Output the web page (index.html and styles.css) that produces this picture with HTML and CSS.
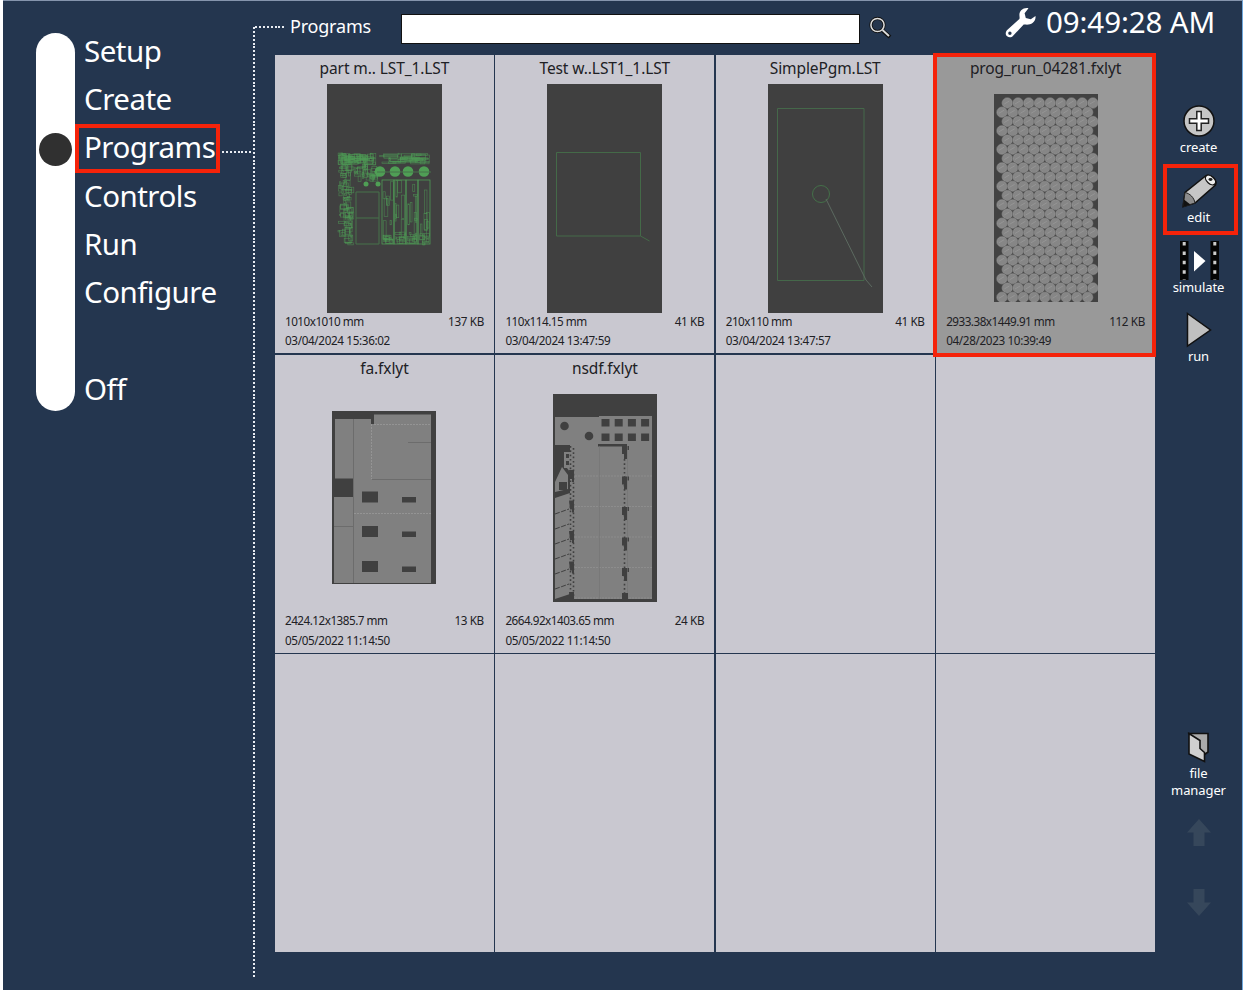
FILE: index.html
```html
<!DOCTYPE html>
<html lang="en">
<head>
<meta charset="utf-8">
<title>Programs</title>
<link rel="stylesheet" href="styles.css">
</head>
<body>
<div class="panel">
  <aside class="sidebar">
    <div class="track"><span class="knob"></span></div>
    <nav class="menu">
      <a class="item">Setup</a>
      <a class="item">Create</a>
      <a class="item active">Programs</a>
      <a class="item">Controls</a>
      <a class="item">Run</a>
      <a class="item">Configure</a>
      <a class="item off">Off</a>
    </nav>
  </aside>
  <div class="rule"></div>
  <div class="work">
    <header class="top">
      <span class="lead"></span>
      <span class="heading">Programs</span>
      <input class="search" type="text" aria-label="Search">
      <svg class="glass" width="24" height="24" viewBox="0 0 24 24"><path d="M14 15l7 6" stroke="#111" stroke-width="4"/><circle cx="8.500" cy="9" r="6.600" fill="#26364d" stroke="#111" stroke-width="3.2"/><circle cx="8.500" cy="9" r="6.600" fill="none" stroke="#ddd" stroke-width="1.5"/><path d="M13.500 14l6.500 6" stroke="#ddd" stroke-width="1.800"/></svg>
      <svg class="wrench" width="32" height="32" viewBox="0 0 32 32"><path fill="#fff" fill-rule="evenodd" d="M23.5 1.2C18.2.3 14.2 3.700 14.400 8.300C14.500 10 14.800 11.100 14.400 12L1.900 23.200C.2 25 .4 27.800 2.100 29.300C4 30.900 6.700 30.500 8.100 28.700L18.700 17.600C20 17.300 21.300 17.900 23.500 17.600C28 17 31 13.200 30.500 9L25.800 12.300L20.800 10.900L19.600 6.200ZM4.900 24.600a1.700 1.700 0 1 1 0 3.400a1.700 1.700 0 1 1 0-3.400Z"/></svg>
      <time class="clock">09:49:28 AM</time>
    </header>
    <div class="body">
      <main class="grid">
        <article class="cell"><h2>part m.. LST_1.LST</h2>
          <div class="thumb"><svg id="nest" width="115" height="229" viewBox="0 0 115 229"><rect width="115" height="229" fill="#404040"/></svg></div>
          <p><span class="dims">1010x1010 mm</span><span>137 KB</span></p><p>03/04/2024 15:36:02</p></article>
        <article class="cell"><h2>Test w..LST1_1.LST</h2>
          <div class="thumb"><svg width="115" height="229" viewBox="0 0 115 229"><rect width="115" height="229" fill="#404040"/><path d="M9.500 68.500h84v83.500h-84zM93.500 152l9 5" fill="none" stroke="#446a48"/></svg></div>
          <p><span class="dims">110x114.15 mm</span><span>41 KB</span></p><p>03/04/2024 13:47:59</p></article>
        <article class="cell"><h2>SimplePgm.LST</h2>
          <div class="thumb"><svg width="115" height="229" viewBox="0 0 115 229"><rect width="115" height="229" fill="#404040"/><path d="M9.500 24.500h86.500v172h-86.500z" fill="none" stroke="#45684a"/><circle cx="53" cy="110" r="8.500" fill="none" stroke="#447049"/><path d="M58 115l40 81 6 7" fill="none" stroke="#5c6a60"/></svg></div>
          <p><span class="dims">210x110 mm</span><span>41 KB</span></p><p>03/04/2024 13:47:57</p></article>
        <article class="cell selected"><h2>prog_run_04281.fxlyt</h2>
          <div class="thumb"><svg id="discs" width="104" height="208" viewBox="0 0 104 208"><rect width="104" height="208" fill="#424242"/></svg></div>
          <p><span class="dims">2933.38x1449.91 mm</span><span>112 KB</span></p><p>04/28/2023 10:39:49</p></article>
        <article class="cell"><h2>fa.fxlyt</h2>
          <div class="thumb"><svg width="104" height="173" viewBox="0 0 104 173"><rect width="104" height="173" fill="#404040"/><path fill="#808080" d="M3 8h36v5h3V3.500h57V172H2V86h19V67.500H3z"/><g fill="#404040"><path d="M30 80.500h16v11H30zM30 115h16v11H30zM30 150h16v11H30zM70 86h14v5.500H70zM70 120.500h14v5.500H70zM70 155.500h14v5.500H70z"/></g><g fill="none"><path stroke="#6c6c6c" d="M21.500 8v164M76 31.500h23M40 68.500h59M2 115.500h19"/><path stroke="#949494" stroke-dasharray="2 1" d="M39.500 13v55M42 13.500h57M22 102.500h77"/></g></svg></div>
          <p><span class="dims">2424.12x1385.7 mm</span><span>13 KB</span></p><p>05/05/2022 11:14:50</p></article>
        <article class="cell"><h2>nsdf.fxlyt</h2>
          <div class="thumb"><svg id="frames" width="104" height="208" viewBox="0 0 104 208"><rect width="104" height="208" fill="#404040"/><path fill="#808080" d="M2 23h44v-1h53v183H17V78l-3-4h-3V58h6V51H2zM2 98V88l7-15 6 8v14zM2 104l15-5v101l-15 5z"/></svg></div>
          <p><span class="dims">2664.92x1403.65 mm</span><span>24 KB</span></p><p>05/05/2022 11:14:50</p></article>
        <article class="cell"></article><article class="cell"></article>
        <article class="cell"></article><article class="cell"></article>
        <article class="cell"></article><article class="cell"></article>
      </main>
      <aside class="rail">
        <button class="act"><svg width="40" height="40" viewBox="0 0 40 40"><circle cx="20" cy="20" r="15" fill="#c6c6c6" stroke="#111" stroke-width="1.500"/><path d="M17.800 10.500h4.400v7.300h7.300v4.400h-7.300v7.300h-4.400v-7.300h-7.300v-4.400h7.300z" fill="#fff" stroke="#222" stroke-width="1.500"/></svg><span>create</span></button>
        <button class="act marked"><svg width="40" height="40" viewBox="0 0 40 40"><path d="M4 35.700L6 21.500 26.500 5C31 2 39 9 36.500 14L16 32z" fill="#c6c6c6" stroke="#111" stroke-width="1.500"/><path d="M6 21.500c5 1 9 5 10 10.500L4 35.700z" fill="#8c8c8c" stroke="#222"/><path d="M4 36L4.900 28.500l6.500 5z" fill="#111"/><ellipse cx="31.500" cy="9" rx="6" ry="3.600" transform="rotate(42 31.500 9)" fill="#ededed" stroke="#111" stroke-width="1.300"/><ellipse cx="31.500" cy="8.500" rx="2" ry="1.400" fill="#222"/></svg><span>edit</span></button>
        <button class="act"><svg width="40" height="40" viewBox="0 0 40 40"><path d="M1 0h8.500v39H1zM31.500 0h8.500v39h-8.500z" fill="#050505"/><path d="M5.200 1v38M35.800 1v38" stroke="#ccc" stroke-width="3" stroke-dasharray="3.500 5.900"/><path d="M15 10l11.500 10-11.500 10.500z" fill="#fff"/></svg><span>simulate</span></button>
        <button class="act"><svg width="40" height="40" viewBox="0 0 40 40"><path d="M8.500 3.500L31.500 20 8.500 36z" fill="#c0c0c0" stroke="#111" stroke-width="1.500"/></svg><span>run</span></button>
        <button class="act files"><svg width="40" height="40" viewBox="0 0 40 40"><path d="M10 8.500h19V27l-4 3z" fill="#aaa" stroke="#111" stroke-width="1.600"/><path d="M10 8.500l11 7v8l4.500 4v9L10 29z" fill="#d0d0d0" stroke="#111" stroke-width="1.600"/></svg><span>file<br>manager</span></button>
        <button class="act arrow up" aria-label="Scroll up"><svg width="26" height="28" viewBox="0 0 26 28"><path d="M13 0l12 13.500h-6.500V27h-11V13.500H1z" fill="#36475b"/></svg></button>
        <button class="act arrow" aria-label="Scroll down"><svg width="26" height="28" viewBox="0 0 26 28"><path d="M13 27L1 13.500h6.500V0h11v13.500H25z" fill="#36475b"/></svg></button>
      </aside>
    </div>
  </div>
</div>
<script src="thumbs.js"></script>
</body>
</html>
```
FILE: thumbs.js
```js
const NS = 'http://www.w3.org/2000/svg';
function add(svg, tag, attrs) {
  const el = document.createElementNS(NS, tag);
  for (const k in attrs) el.setAttribute(k, attrs[k]);
  svg.appendChild(el);
}

// Hexagonally packed discs
const discs = document.getElementById('discs');
for (let r = 0; r < 22; r++) {
  for (let c = 0; c < 9; c++) {
    const cx = (r % 2 ? 8 : 13.3) + c * 10.7, cy = 9 + r * 9.25;
    add(discs, 'circle', { cx, cy, r: 5.1, fill: '#868686', stroke: '#a0a0a0', 'stroke-width': 0.7 });
    add(discs, 'circle', { cx, cy, r: 5.5, fill: 'none', stroke: '#5e5e5e', 'stroke-width': 0.5 });
    add(discs, 'path', { d: `M${cx - 3} ${cy + 1}l5-3`, stroke: '#989898', 'stroke-width': 0.8 });
  }
}

// Dense nest of small cut parts
const nest = document.getElementById('nest');
let seed = 7;
const rnd = () => (seed = (seed * 16807) % 2147483647) / 2147483647;
function parts(n, x, y, w, h, mw, mh) {
  for (let i = 0; i < n; i++) {
    const pw = 1 + rnd() * mw, ph = 1 + rnd() * mh;
    add(nest, 'rect', { x: x + rnd() * (w - pw), y: y + rnd() * (h - ph), width: pw, height: ph,
      fill: 'none', stroke: '#4f9a55', 'stroke-width': 0.65, opacity: 0.7 });
  }
}
parts(65, 11, 69, 38, 12, 8, 6);
parts(32, 50, 69, 54, 11, 18, 3);
parts(70, 11, 80, 16, 81, 7, 7);
parts(30, 27, 80, 25, 18, 7, 7);
for (let k = 0; k < 4; k++) {
  const x = 56 + k * 12;
  parts(7, x, 95, 11, 65, 3, 30);
  parts(9, x, 148, 11, 13, 7, 5);
  add(nest, 'rect', { x: x - 1, y: 96, width: 12, height: 64, fill: 'none', stroke: '#4f9a55', 'stroke-width': 0.8 });
}
[53, 68, 81, 97].forEach(cx => add(nest, 'circle', { cx, cy: 87.5, r: 5.3, fill: '#4f9f55' }));
[[39, 100], [51, 100]].forEach(p => add(nest, 'circle', { cx: p[0], cy: p[1], r: 2.5, fill: '#4f9f55' }));
add(nest, 'path', { d: 'M29 108h23v52H29zM29 134h23M50 88h54', fill: 'none', stroke: '#46724a' });

// Sheet with square cut-outs, toothed columns and stacked brackets
const frames = document.getElementById('frames');
const dark = '#404040';
[0, 1, 2, 3].forEach(c => [25, 39.5].forEach(y =>
  add(frames, 'rect', { x: 48.5 + c * 13.2, y, width: 8, height: 7.5, fill: dark })));
[[11.5, 32], [36, 42]].forEach(p => add(frames, 'circle', { cx: p[0], cy: p[1], r: 4.3, fill: dark }));
add(frames, 'path', { d: 'M45 50h29v2.500H45zM6 88h8v8H6zM13 60h3v4h-3zM13 67h3v4h-3z', fill: dark });
for (let i = 0; i < 5; i++) {
  const y = 52 + i * 30.5;
  add(frames, 'path', { d: `M16 ${y + 24}h5v12h-2v-3h-2zM69 ${y}h7v4h-2v9h-3v-5h-2z`, fill: dark });
  add(frames, 'path', { d: `M22 ${y + 30}h77`, stroke: '#969696', 'stroke-width': 0.6, 'stroke-dasharray': '2 1' });
}
add(frames, 'path', { d: 'M17.500 52v150M20.500 54v148M71.500 65v140', stroke: dark, 'stroke-width': 1.6, 'stroke-dasharray': '1.700 2.600' });
add(frames, 'path', { d: 'M46.500 52v153M74.500 52v153', stroke: '#727272', 'stroke-width': 0.6 });
for (let y = 120; y < 205; y += 15) {
  add(frames, 'path', { d: `M2 ${y}l14-5`, stroke: dark, 'stroke-width': 1, 'stroke-dasharray': '5 1.500' });
}
add(frames, 'path', { d: 'M69 199h6v7h-6zM16 200h5v6h-5z', fill: dark });
```
FILE: styles.css
```css
*, *::before, *::after { box-sizing: border-box; }
body { margin: 0; background: #fff; font-family: "Noto Sans", "Open Sans", sans-serif; overflow: hidden; }
.panel {
  display: flex; width: 1240px; height: 990px; margin-left: 3px;
  background: #24364f; color: #fff;
  border-top: 1px solid #8595ad; border-right: 1px solid #6fa8dc;
}
.sidebar { display: flex; width: 250px; padding: 32px 0 0 33px; }
.track { width: 39px; height: 378px; padding: 100px 3px 0; border-radius: 20px; background: #fff; }
.knob { display: block; width: 33px; height: 33px; border-radius: 50%; background: #303030; }
.menu { display: flex; flex-direction: column; width: 178px; margin-top: -7px; }
.item {
  display: flex; align-items: center; height: 48.3px; padding-left: 9px;
  font-size: 29.500px; letter-spacing: -0.500px; white-space: nowrap;
}
.active { position: relative; }
.active::before {
  content: ""; position: absolute; left: 0; top: 1px; width: 145px; height: 49px; border: 4px solid #f5230a;
}
.active::after {
  content: ""; position: absolute; left: 147px; top: 28px; width: 31px; height: 2px;
  background: repeating-linear-gradient(90deg, #e8ecf2 0 2px, transparent 2px 3.900px);
}
.off { margin-top: 48.3px; }
.rule {
  width: 2px; height: 951px; margin-top: 26px;
  background: repeating-linear-gradient(#e8ecf2 0 2px, transparent 2px 3.900px);
}
.work { flex: 1; display: flex; flex-direction: column; }
.top { display: flex; align-items: center; height: 54px; padding-bottom: 4px; }
.lead {
  width: 31px; height: 2px; margin-top: 2px;
  background: repeating-linear-gradient(90deg, #e8ecf2 0 2px, transparent 2px 3.900px);
}
.heading { width: 115px; padding-left: 4px; font-size: 18px; letter-spacing: -0.2px; }
.search { width: 459px; height: 30px; margin-top: 6px; padding: 0 6px; background: #fff; border: 1px solid #111; }
.glass { margin: 4px 0 0 9px; }
.wrench { margin: -6px 0 0 112px; }
.clock { margin: -9px 0 0 9px; font-size: 29.500px; letter-spacing: -0.100px; white-space: nowrap; }
.body { display: flex; }
.grid {
  display: grid; grid-template: repeat(3, 1fr) / repeat(4, 1fr); gap: 1.500px;
  width: 880px; height: 897px; margin-left: 20px; background: #24364f;
}
.cell { display: flex; flex-direction: column; padding: 3px 10px 0; background: #c9c8d0; color: #202024; min-width: 0; }
.cell h2 { margin: 0; height: 25.500px; font-size: 15.500px; font-weight: 400; line-height: 21px; text-align: center; letter-spacing: -0.100px; white-space: nowrap; }
.thumb { display: flex; align-items: center; justify-content: center; height: 229px; }
.thumb svg { flex: none; }
.cell p { display: flex; justify-content: space-between; margin: 0; height: 19.500px; font-size: 11.700px; line-height: 17px; letter-spacing: -0.350px; white-space: nowrap; }
.dims { letter-spacing: -0.500px; }
.selected { position: relative; background: #999; }
.selected::after {
  content: ""; position: absolute; left: -3px; top: -2px; right: -1px; bottom: -4px; border: 4px solid #f5230a;
}
.rail { display: flex; flex-direction: column; align-items: center; flex: 1; padding-top: 39px; }
.act {
  display: flex; flex-direction: column; align-items: center; width: 75px; height: 69.800px; padding: 7px 0 0;
  border: 0; background: none; color: #fff; font: 13px/16px "Noto Sans", sans-serif; letter-spacing: -0.100px;
}
.act svg { display: block; flex: none; }
.act span { margin-top: -2px; }
.marked { position: relative; }
.marked::after {
  content: ""; position: absolute; left: 2px; top: 0; width: 75px; height: 71px; border: 4px solid #f5230a;
}
.files { height: 84px; margin-top: 345px; }
.files span { margin-top: 0; line-height: 16.500px; }
.arrow { padding: 14px 0 0; }
.up { margin-top: 3px; }
```
